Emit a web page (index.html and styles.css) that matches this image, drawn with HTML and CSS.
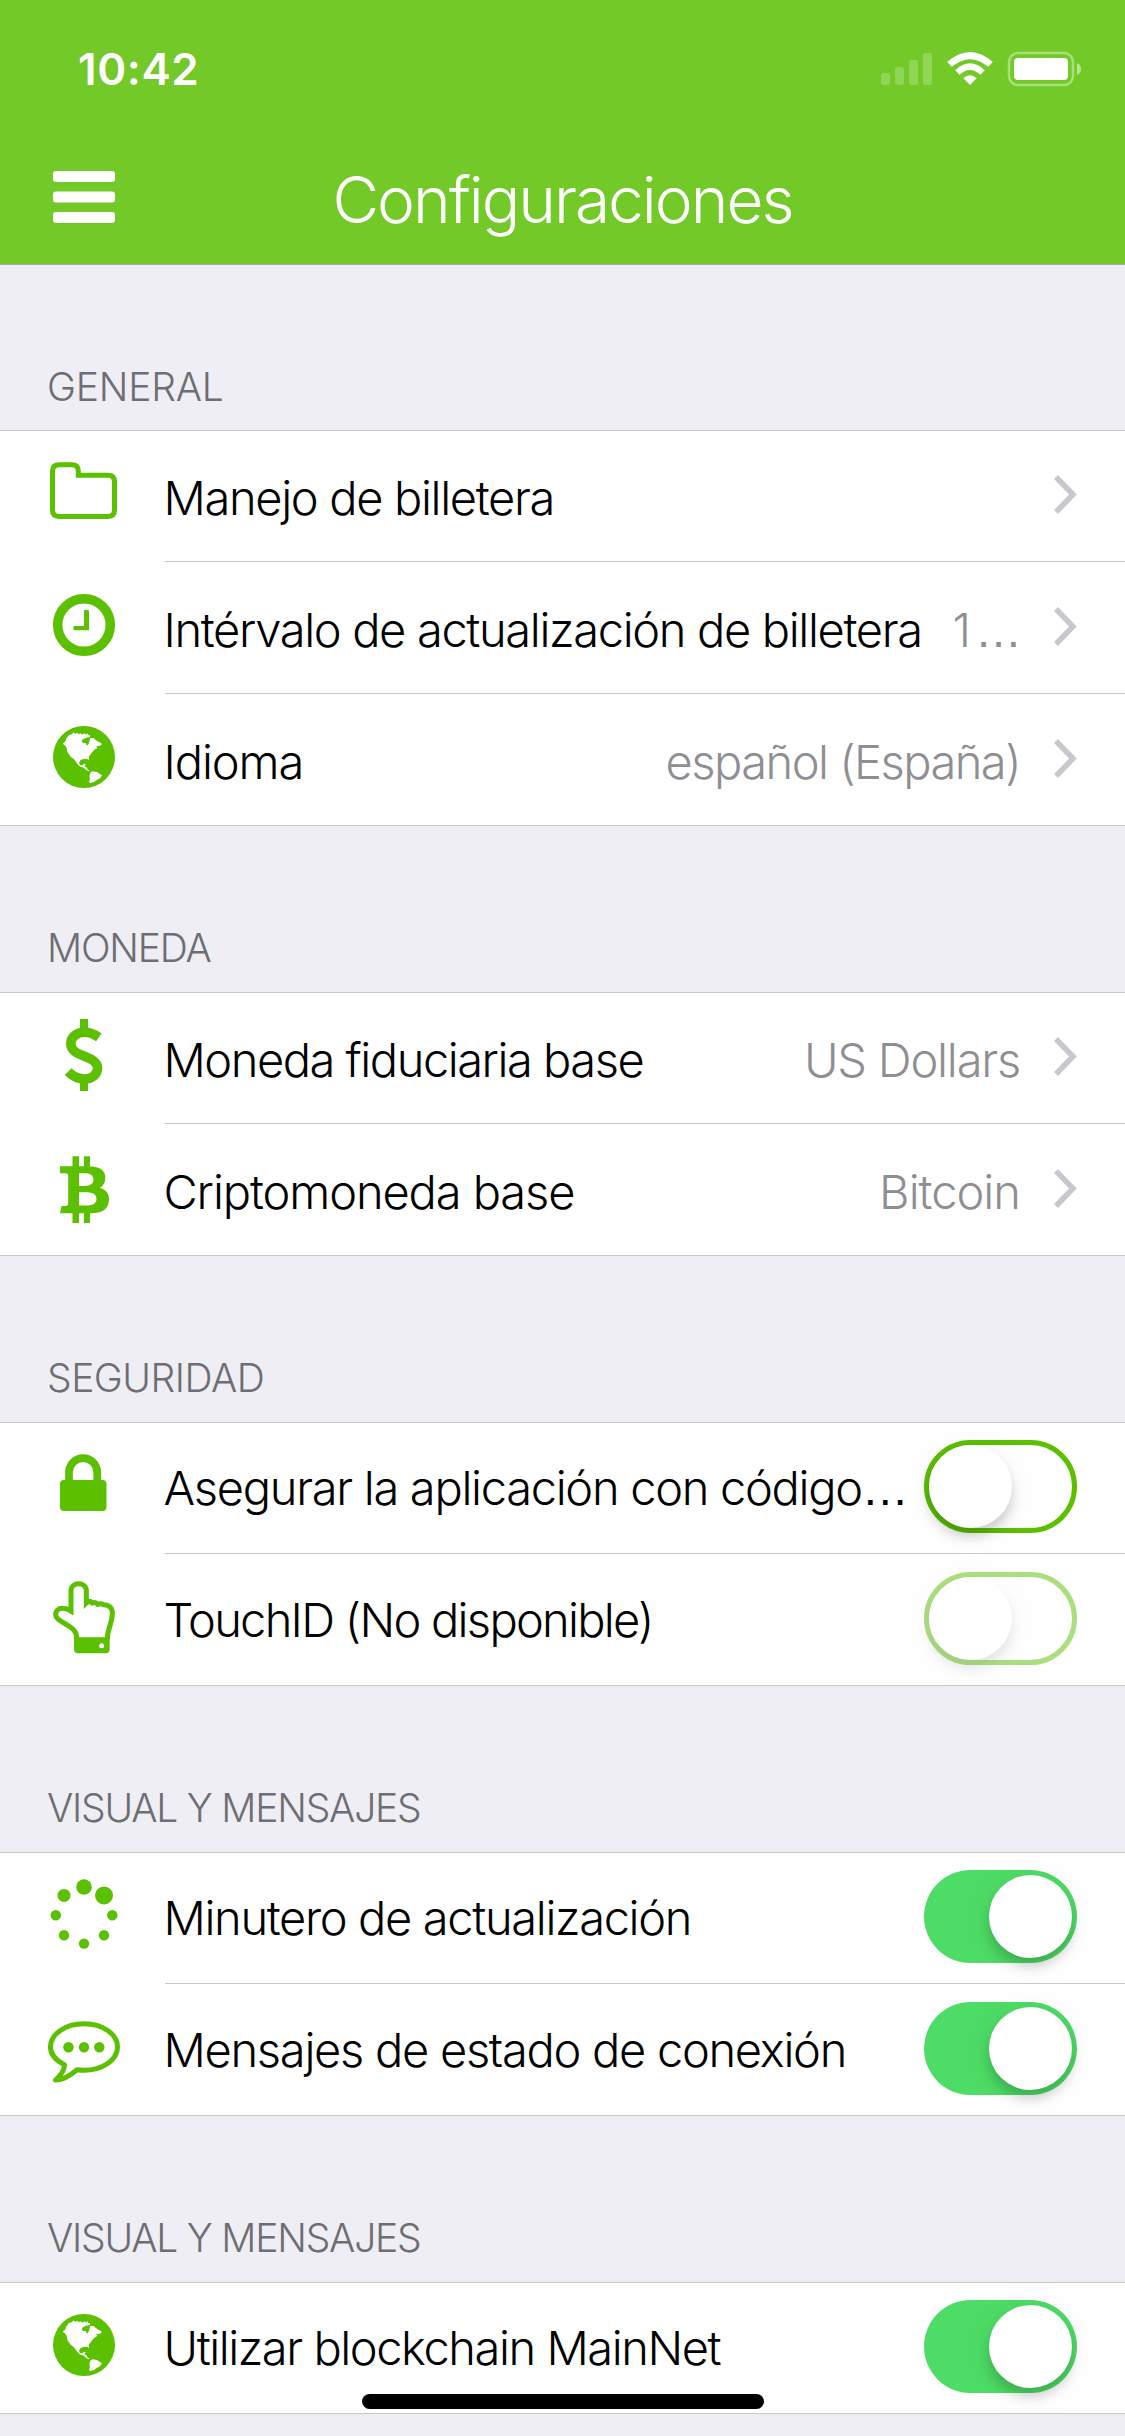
FILE: index.html
```
<!DOCTYPE html>
<html lang="es">
<head>
<meta charset="utf-8">
<title>Configuraciones</title>
<link rel="stylesheet" href="styles.css">
</head>
<body>
<svg class="defs" aria-hidden="true">
  <symbol id="globe" viewBox="0 0 165 131">
    <g transform="translate(46 26) scale(.3333)">
      <circle cx="114" cy="111" r="93" fill="#5ac000"/>
      <path fill="#fff" d="M50 71L59 63L60 57L68 46L78 42L83 37L87 42L94 38L98 43L104 40L110 44L116 40L120 44L124 39L126 45L131 45L132 51L120 53L110 58L107 65L112 69L119 69L123 77L128 71L130 64L133 54L143 54L149 60L157 65L164 68L168 73L160 78L150 79L154 84L145 89L139 96L133 104L128 110L129 120L124 117L112 117L103 121L99 129L103 136L110 136L113 131L119 132L116 140L122 142L125 149L132 152L128 154L120 149L113 143L101 139L92 129L84 118L74 110L64 96L62 84L58 77Z"/>
      <path fill="#fff" d="M133 158L139 154L154 156L158 160L168 166L162 175L152 180L144 186L133 189L129 187L132 176L130 168Z"/>
    </g>
  </symbol>
  <symbol id="chevron" viewBox="0 0 23 39">
    <path d="M2 2L19 19.5L2 37" fill="none" stroke="#c7c7cc" stroke-width="5.5"/>
  </symbol>
</svg>

<header class="navbar">
  <div class="status">
    <span class="time">10:42</span>
    <svg class="indicators" width="204" height="36" viewBox="879 51 204 36">
      <g fill="#fff" fill-opacity=".22">
        <rect x="881" y="73" width="9" height="12" rx="2.5"/>
        <rect x="895" y="67" width="9" height="18" rx="2.5"/>
        <rect x="909" y="60" width="9" height="25" rx="2.5"/>
        <rect x="923" y="53" width="9" height="32" rx="2.5"/>
      </g>
      <path fill="#fff" d="M970 85L963.3 78.2Q970 72.4 976.7 78.2ZM959.6 74.8L955.2 70.2Q970 56.4 984.8 70.2L980.4 74.8Q970 65.4 959.6 74.8ZM951.8 66.7L947.2 62Q970 42 992.8 62L988.2 66.7Q970 51.6 951.8 66.7Z"/>
      <rect x="1009" y="53" width="64" height="32" rx="9" fill="none" stroke="#fff" stroke-opacity=".4" stroke-width="2.5"/>
      <rect x="1014" y="58" width="54" height="22" rx="4" fill="#fff"/>
      <path d="M1077 63Q1081 65 1081 69T1077 75Z" fill="#fff" fill-opacity=".5"/>
    </svg>
  </div>
  <div class="titlebar">
    <svg class="menu" width="62" height="52" viewBox="0 0 62 52" fill="#fff">
      <rect width="62" height="11" rx="3"/><rect y="20.5" width="62" height="11" rx="3"/><rect y="41" width="62" height="11" rx="3"/>
    </svg>
    <h1 class="title">Configuraciones</h1>
  </div>
</header>

<main>
  <section>
    <h2 class="heading general">GENERAL</h2>
    <ul class="list">
      <li class="row">
        <svg class="icon" viewBox="0 0 165 131"><path d="M59 34.7H72Q78.3 34.7 78.3 41V45.2H108Q114.5 45.2 114.5 51.7V80Q114.5 86.4 108 86.4H59Q52.5 86.4 52.5 80V41.2Q52.5 34.7 59 34.7Z" fill="none" stroke="#5ac000" stroke-width="5"/></svg>
        <div class="cell"><span class="label">Manejo de billetera</span><svg class="chevron"><use href="#chevron"/></svg></div>
      </li>
      <li class="row">
        <svg class="icon" viewBox="0 0 165 131"><circle cx="84" cy="63" r="26.3" fill="none" stroke="#5ac000" stroke-width="9.5"/><path d="M85 48H88Q89 48 89 49V68.3H74.5Q73.5 68.3 73.5 67.3V65Q73.5 64 74.5 64H84V49Q84 48 85 48Z" fill="#5ac000"/></svg>
        <div class="cell"><span class="label">Intérvalo de actualización de billetera</span><span class="value interval">1<span class="dots">…</span></span><svg class="chevron"><use href="#chevron"/></svg></div>
      </li>
      <li class="row">
        <svg class="icon"><use href="#globe"/></svg>
        <div class="cell"><span class="label language">Idioma</span><span class="value">español (España)</span><svg class="chevron"><use href="#chevron"/></svg></div>
      </li>
    </ul>
  </section>

  <section>
    <h2 class="heading currency">MONEDA</h2>
    <ul class="list">
      <li class="row">
        <svg class="icon" viewBox="0 0 165 131" fill="none" stroke="#5ac000"><path stroke-width="8" d="M84 27V38M84 89V99"/><path stroke-width="9.5" d="M98.8 45.4C94 42 89 40.3 84.5 40.3C76.5 40.3 70.8 45 70.8 51.5C70.8 58 76 61 84 64C92 67 97.6 70.5 97.6 76C97.6 82.5 92 87 85 87C79 87 73 84.5 68.2 79.6"/></svg>
        <div class="cell"><span class="label fiat">Moneda fiduciaria base</span><span class="value fiat-value">US Dollars</span><svg class="chevron"><use href="#chevron"/></svg></div>
      </li>
      <li class="row">
        <svg class="icon" viewBox="0 0 165 131" fill="#5ac000"><path d="M72.5 32.3H79V43H72.5ZM84 32.3H90V43H84ZM72.5 88H79V99H72.5ZM84 88H90V99H84Z"/><path fill-rule="evenodd" d="M60 42.3H88C99 42.3 105.3 46 105.3 53.5C105.3 58.5 103.5 62 99.6 63.7C106 65.5 109 69.5 109 75C109 85 102 89.3 91 89.3H60L61.5 82H65.5Q68.2 82 68.2 79.3V52Q68.2 49.3 65.5 49.3H60ZM79 49.3V62H84C90.5 62 93.5 60 93.5 55.6C93.5 51 90 49.3 84 49.3ZM79 68.3V81.6H85C93 81.6 96.5 79.5 96.5 75C96.5 70.3 93 68.3 86 68.3Z"/></svg>
        <div class="cell"><span class="label crypto">Criptomoneda base</span><span class="value crypto-value">Bitcoin</span><svg class="chevron"><use href="#chevron"/></svg></div>
      </li>
    </ul>
  </section>

  <section>
    <h2 class="heading security">SEGURIDAD</h2>
    <ul class="list switches">
      <li class="row">
        <svg class="icon" viewBox="0 0 165 131"><rect x="60" y="58" width="46.5" height="31" rx="4" fill="#5ac000"/><path d="M69 60V50.3A14.1 14.1 0 0 1 97.2 50.3V60" fill="none" stroke="#5ac000" stroke-width="7.7"/></svg>
        <div class="cell"><span class="label passcode">Asegurar la aplicación con código<span class="dots">…</span></span><span class="switch off"><i class="knob"></i></span></div>
      </li>
      <li class="row">
        <svg class="icon" viewBox="0 0 165 131"><g transform="translate(46 24) scale(.3333)"><path d="M92 184C94 160 78 150 62 140C44 129 29 122 29 112C28 98 38 90 50 91Q62 91 75 99V39C75 25 86 17.5 98 17.5S121 25 121 39V75Q130 66 139 75Q149 71 155 79Q166 75 173 80C192 80 200 92 199 109C198 138 184 152 184 184" fill="none" stroke="#5ac000" stroke-width="15"/><path d="M84 178H191V214Q191 226 179 226H96Q84 226 84 214Z" fill="#5ac000"/><circle cx="167" cy="203" r="7.5" fill="#fff"/></g></svg>
        <div class="cell"><span class="label touchid">TouchID (No disponible)</span><span class="switch off disabled"><i class="knob"></i></span></div>
      </li>
    </ul>
  </section>

  <section>
    <h2 class="heading visual">VISUAL Y MENSAJES</h2>
    <ul class="list switches">
      <li class="row">
        <svg class="icon" viewBox="0 0 165 131" fill="#5ac000"><circle cx="84" cy="35" r="7.8"/><circle cx="104" cy="43.4" r="9"/><circle cx="112.3" cy="63.3" r="5.2"/><circle cx="104" cy="83.3" r="5.2"/><circle cx="84" cy="91.6" r="5.2"/><circle cx="64" cy="83.3" r="5.2"/><circle cx="55.8" cy="63.3" r="5.2"/><circle cx="64" cy="43.4" r="6.5"/></svg>
        <div class="cell"><span class="label">Minutero de actualización</span><span class="switch on"><i class="knob"></i></span></div>
      </li>
      <li class="row">
        <svg class="icon" viewBox="0 0 165 131"><path d="M77 85.7C69 93 61 96 55.5 96C60 92 64.5 87 64.5 80.7C56 76.5 50.5 70.5 50.5 63C50.5 50 65.5 39.8 84 39.8S117.5 50 117.5 63S102.5 86.2 84 86.2Q80.5 86.2 77 85.7Z" fill="none" stroke="#5ac000" stroke-width="5" stroke-linejoin="round"/><g fill="#5ac000"><circle cx="68.5" cy="63.3" r="5.2"/><circle cx="84" cy="63.3" r="5.2"/><circle cx="99.3" cy="63.3" r="5.2"/></g></svg>
        <div class="cell"><span class="label messages">Mensajes de estado de conexión</span><span class="switch on"><i class="knob"></i></span></div>
      </li>
    </ul>
  </section>

  <section>
    <h2 class="heading visual">VISUAL Y MENSAJES</h2>
    <ul class="list switches">
      <li class="row">
        <svg class="icon"><use href="#globe"/></svg>
        <div class="cell"><span class="label mainnet">Utilizar blockchain MainNet</span><span class="switch on"><i class="knob"></i></span></div>
      </li>
    </ul>
  </section>
</main>
<div class="home-indicator"></div>
</body>
</html>
```
FILE: styles.css
```
* { box-sizing: border-box; margin: 0; padding: 0; }

body {
  width: 1125px;
  height: 2436px;
  overflow: hidden;
  position: relative;
  background: #efeef4;
  font-family: Inter, "Liberation Sans", sans-serif;
  font-weight: 300;
}

.defs { display: none; }

/* Navigation bar */
.navbar {
  height: 265px;
  background: #72c927;
  border-bottom: 1px solid #a3ac9c;
  color: #fff;
}
.status {
  height: 132px;
  padding: 0 42px 0 78px;
  display: flex;
  justify-content: space-between;
  align-items: flex-start;
}
.time {
  padding-top: 41px;
  font-size: 44px;
  line-height: 56px;
  font-weight: 600;
  letter-spacing: 0.6px;
}
.indicators { margin-top: 51px; }
.titlebar {
  height: 132px;
  padding: 0 53px;
  display: grid;
  grid-template-columns: 62px 1fr 62px;
}
.menu { margin-top: 39px; }
.title {
  padding-top: 28px;
  text-align: center;
  font-size: 64px;
  line-height: 80px;
  font-weight: 300;
  letter-spacing: -2px;
}

/* Sections */
.heading {
  height: 166px;
  padding: 98px 0 0 47px;
  font-size: 39px;
  line-height: 47px;
  font-weight: 300;
  color: #6d6d72;
}
.heading.general { height: 165px; letter-spacing: -0.2px; }
.heading.currency { letter-spacing: -1.2px; }
.heading.security { letter-spacing: -0.5px; }
.heading.visual { letter-spacing: -1.21px; }

.list { list-style: none; background: #fff; box-shadow: inset 0 1px #c8c7cc; }
.row {
  height: 132px;
  display: grid;
  grid-template-columns: 165px 1fr;
}
.row:last-child { border-bottom: 1px solid #c8c7cc; }
.icon { width: 165px; height: 131px; }
.cell {
  display: flex;
  align-items: flex-start;
  padding-right: 48px;
}
.row:not(:last-child) .cell { border-bottom: 1px solid #c8c7cc; }

.label, .value {
  padding-top: 39px;
  font-size: 47px;
  line-height: 57px;
  white-space: nowrap;
  letter-spacing: -1.34px;
}
.label { color: #000; margin-left: -1.5px; margin-right: auto; }
.switches .label { padding-top: 37px; }
.value { color: #8e8e93; letter-spacing: -1.52px; }
.dots { font-family: "Liberation Sans", sans-serif; letter-spacing: 0; line-height: 1; }
.language { letter-spacing: -1.1px; }
.interval { letter-spacing: 4px; margin-right: -2px; }
.fiat { letter-spacing: -1.47px; }
.fiat-value { letter-spacing: -1.2px; }
.crypto { letter-spacing: -1.1px; }
.crypto-value { letter-spacing: -1px; }
.passcode { letter-spacing: -1.3px; }
.touchid { letter-spacing: -1.72px; }
.messages { letter-spacing: -1.28px; }
.mainnet { letter-spacing: -1.44px; }

.chevron { width: 23px; height: 39px; margin: 45px 0 0 34px; flex: none; }

/* Switches */
.switch {
  flex: none;
  display: flex;
  width: 153px;
  height: 93px;
  margin-top: 18px;
  padding: 5px;
  border-radius: 47px;
}
.knob {
  width: 83px;
  height: 83px;
  border-radius: 50%;
  background: #fff;
  box-shadow: 0 9px 12px rgba(0, 0, 0, .17), 0 3px 36px rgba(0, 0, 0, .06);
}
.off { padding: 0; border: 5px solid #5ac000; }
.on { background: #4ddc65; justify-content: flex-end; }
.disabled { opacity: .5; }

.home-indicator {
  position: absolute;
  left: 362px;
  top: 2394px;
  width: 402px;
  height: 15px;
  border-radius: 7.5px;
  background: #000;
}
```
